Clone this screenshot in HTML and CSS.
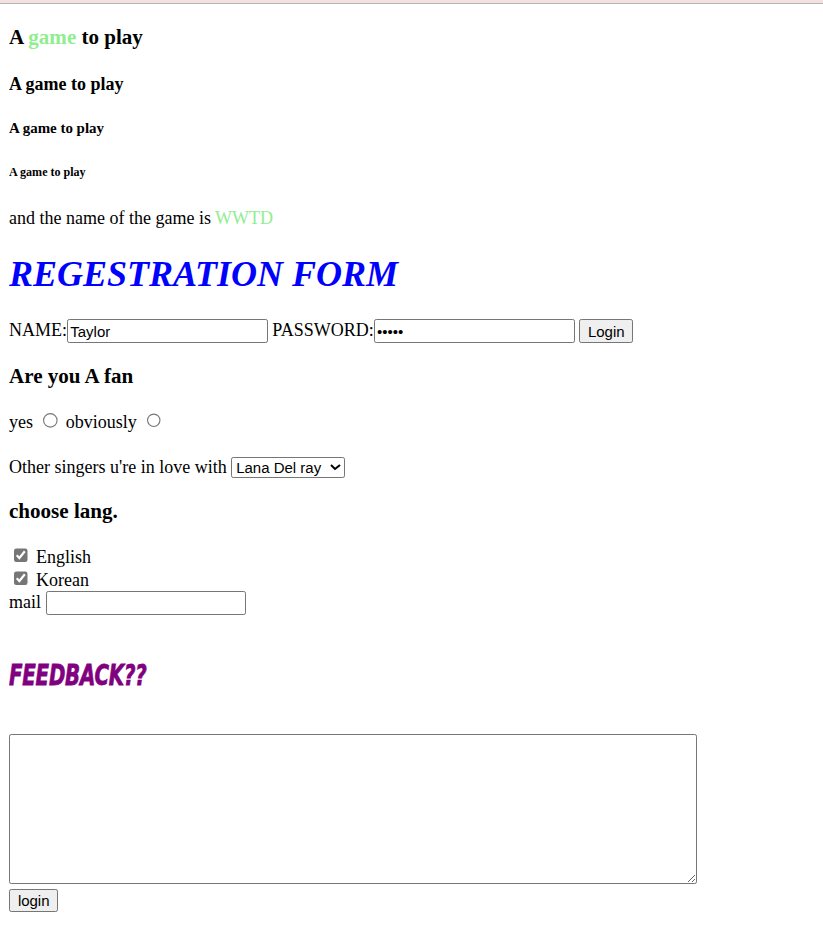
FILE: index.html
```html
<!DOCTYPE html>
<html>
<head>
<meta charset="utf-8">
<title>A game to play</title>
<link rel="stylesheet" href="styles.css">
</head>
<body>
<h3>A <span class="green">game</span> to play</h3>
<h4>A game to play</h4>
<h5>A game to play</h5>
<h6>A game to play</h6>
<p>and the name of the game is <span class="green">WWTD</span></p>
<h1 class="title">REGESTRATION FORM</h1>
<form class="form">
NAME:<input class="field" type="text" value="Taylor"> PASSWORD:<input class="field" type="password" value="12345"> <button class="btn" type="button">Login</button>
<h3>Are you A fan</h3>
<p class="fan-row">yes <input class="radio" type="radio" name="fan"> obviously <input class="radio" type="radio" name="fan"></p>
<p>Other singers u're in love with <select class="select"><option>Lana Del ray</option></select></p>
<h3>choose lang.</h3>
<input class="check" type="checkbox" checked> English<br>
<input class="check" type="checkbox" checked> Korean<br>
mail <input class="field mail" type="email">
<br><br>
<h2 class="feedback"><span class="feedback-text">FEEDBACK??</span></h2>
<br>
<textarea class="area"></textarea><br>
<button class="btn" type="button">login</button>
</form>
</body>
</html>
```
FILE: styles.css
```css
html {
  zoom: 1.125;
  background: linear-gradient(#f3e1e1 0, #f3e1e1 2.67px, #bcb4b4 2.67px, #bcb4b4 3.56px, #ffffff 3.56px) no-repeat;
  background-color: #fff;
}
body {
  margin: 3.5px 8px 8px 8px;
  font-family: "Liberation Serif", "Times New Roman", serif;
  font-size: 16px;
  color: #000;
}
.green {
  color: #90ee90;
}
.title {
  color: #0000ff;
  font-style: italic;
}
.field {
  box-sizing: border-box;
  width: 178.5px;
  height: 21px;
  font-family: "Liberation Sans", Arial, sans-serif;
  font-size: 13.333px;
  border: 1px solid #767676;
  border-radius: 2px;
  padding: 1px 2px;
  margin: 0;
  vertical-align: baseline;
}
.mail {
  width: 178px;
}
.btn {
  box-sizing: border-box;
  font-family: "Liberation Sans", Arial, sans-serif;
  font-size: 13.333px;
  background: #efefef;
  border: 1px solid #767676;
  border-radius: 2px;
  padding: 1px 7px;
  height: 21px;
  margin: 0;
  color: #000;
}
.fan-row {
  margin-bottom: 21px;
}
.radio {
  margin: 3px 3px 0 5px;
}
.check {
  accent-color: #767676;
  margin: 3px 3px 3px 4px;
}
.select {
  box-sizing: border-box;
  font-family: "Liberation Sans", Arial, sans-serif;
  font-size: 13.333px;
  border: 1px solid #767676;
  border-radius: 2px;
  background: #fff;
  height: 19px;
  width: 101px;
  color: #000;
}
.feedback {
  font-family: "DejaVu Sans", sans-serif;
  font-style: italic;
  font-weight: bold;
  font-size: 24px;
  color: #800080;
  margin-top: 21px;
  margin-bottom: 18.1px;
}
.feedback-text {
  display: inline-block;
  font-size: 25px;
  transform: scaleX(0.705);
  transform-origin: left center;
  letter-spacing: -0.3px;
  -webkit-text-stroke: 0.7px #800080;
}
.area {
  box-sizing: border-box;
  width: 611.5px;
  height: 133.3px;
  border: 1px solid #767676;
  border-radius: 2px;
  margin: 0;
  padding: 2px;
}
```
